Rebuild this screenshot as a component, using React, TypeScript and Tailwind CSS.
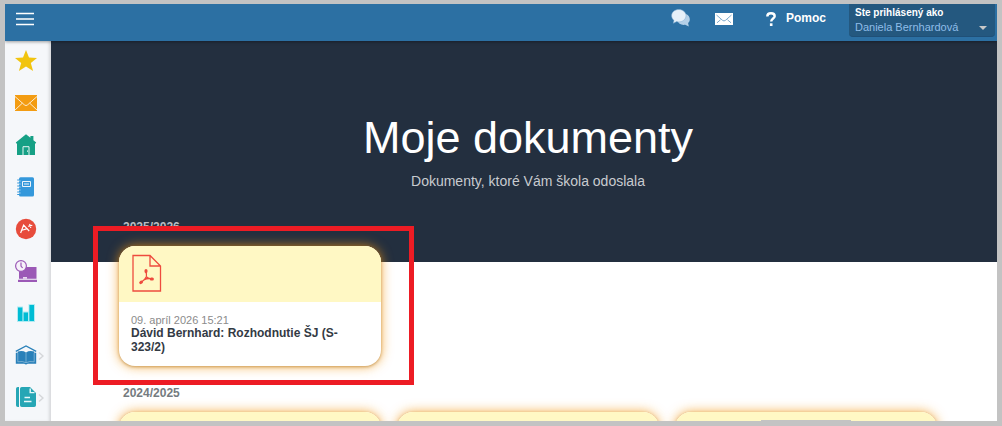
import React from 'react';

interface NavItem {
  label: string;
  icon: React.ReactNode;
  hasSubmenu?: boolean;
}

interface DocumentItem {
  id: number;
  date?: string;
  title?: string;
  highlighted?: boolean;
  preview?: boolean;
}

interface YearGroup {
  year: string;
  documents: DocumentItem[];
}

const navItems: NavItem[] = [
  {
    label: 'Obľúbené',
    icon: <path fill="#f1c40f" d="M11 0l3 7.6 8 .4-6.2 5 2.3 8L11 16.600 3.900 21l2.300-8L0 8l8-.400z" />,
  },
  {
    label: 'Správy',
    icon: (
      <>
        <path fill="#f39c12" d="M0 3h22v16H0z" />
        <path fill="none" stroke="#fdebd0" d="M0 4.500l9.300 8.300q1.700 1.600 3.400 0L22 4.500M0 18l7.300-6.800M22 18l-7.300-6.800" />
      </>
    ),
  },
  {
    label: 'Domov',
    icon: (
      <>
        <path fill="#16a085" d="M11 .2L.8 8.600l.8 1.200.4-.2V21h18V9.600l.4.2.8-1.200-2.800-2.300V2h-3v1.700z" />
        <path fill="none" stroke="#e8f6f3" d="M8 21v-8.300h6V21" />
        <path fill="#e8f6f3" d="M12 16.500h1v1.200h-1z" />
      </>
    ),
  },
  {
    label: 'Triedna kniha',
    icon: (
      <>
        <rect x="4" y="1.3" width="15" height="19.2" rx="1.5" fill="#3498db" />
        <path stroke="#3498db" strokeWidth="1" d="M2.200 4h3M2.200 7h3M2.200 10h3M2.200 13h3M2.200 16h3M2.200 18.500h3" />
        <path stroke="#d6eaf8" strokeWidth=".7" d="M4 5h1.600M4 8h1.600M4 11h1.600M4 14h1.600M4 17h1.600" />
        <path fill="#3498db" stroke="#eaf4fb" strokeWidth="1" d="M7.500 5.500h8v5h-8z" />
        <path stroke="#eaf4fb" d="M9 8h5" />
      </>
    ),
  },
  {
    label: 'Známky',
    icon: (
      <>
        <circle cx="11" cy="11" r="10.200" fill="#e74c3c" />
        <path fill="none" stroke="#fff" strokeWidth="1.200" d="M5.600 15L8.600 7l5.600 6M6 12.500l6.400-1.800M13.300 8.400l4-1.200M14.600 5.800l1.200 4" />
      </>
    ),
  },
  {
    label: 'Rozvrh',
    icon: (
      <>
        <path fill="#9b59b6" d="M4 7h17.500v11.800H4zM3 19.800h19V22H3z" />
        <path fill="#e8daef" d="M8 17h4v1.800H8z" />
        <circle cx="6" cy="6" r="5.400" fill="#f7f2fa" stroke="#9b59b6" strokeWidth="1.200" />
        <path fill="none" stroke="#9b59b6" strokeWidth="1.200" d="M6 2.600V6l1.600 2" />
      </>
    ),
  },
  {
    label: 'Dochádzka',
    icon: (
      <>
        <path fill="#b2ebf2" d="M2 4.500h6v5h5.500V2H20v18H2z" />
        <path fill="#00bcd4" d="M3 5.500h4.400V19H3zM8.600 10.500H13V19H8.600zM14.400 3H19v16h-4.600z" />
      </>
    ),
  },
  {
    label: 'Vyučovanie',
    hasSubmenu: true,
    icon: (
      <>
        <path fill="none" stroke="#2980b9" strokeWidth="1.200" d="M.8 7.400L11 2l10.200 5.400" />
        <path fill="#2980b9" d="M2.800 7.500Q7.500 6.200 11 8.400q3.500-2.200 8.200-.9v1.300h2v11h-8.500q-1.700 1.400-3.400 0H.8v-11h2z" />
        <path fill="none" stroke="#a9cce3" strokeWidth=".6" d="M2.800 8.800v9Q7.500 16.800 11 18.700q3.500-1.900 8.200-.9v-9M11 8.400v10" />
      </>
    ),
  },
  {
    label: 'Dokumenty',
    hasSubmenu: true,
    icon: (
      <>
        <path fill="#26a6b5" d="M2.800 1H4v20H2.800Q1 21 1 19.200V2.800Q1 1 2.800 1zM6.800 1H15l6 6v12.200q0 1.800-1.800 1.800H6.800Q5 21 5 19.200V2.800Q5 1 6.800 1z" />
        <path fill="none" stroke="#e8f8f9" strokeWidth="1.400" d="M15.200 2.400v4.200h4.300M9.500 11.500h5.500M9 15.500h7.500" />
      </>
    ),
  },
];

const groups: YearGroup[] = [
  {
    year: '2025/2026',
    documents: [
      { id: 1, date: '09. apríl 2026 15:21', title: 'Dávid Bernhard: Rozhodnutie ŠJ (S-323/2)', highlighted: true },
    ],
  },
  {
    year: '2024/2025',
    documents: [{ id: 2 }, { id: 3 }, { id: 4, preview: true }],
  },
];

const PdfIcon: React.FC = () => (
  <svg viewBox="0 0 30 38" className="h-[38px] w-[30px]" fill="none" stroke="#ee4b3e" strokeWidth="1.300" aria-hidden="true">
    <path d="M1 1.500h17l10.500 10.500v25H1zM18 1.500V12h10.500" />
    <path strokeLinejoin="round" d="M14 17.500q.8 3.500.3 5.200-1.500 3.300-4.500 5M14.300 22.700q1.700 1.800 4.700 2.100M11.800 25.800q3.500-1.700 7.200-1.200" />
    <g strokeWidth="3" strokeLinecap="round">
      <path d="M14 16.500v1M8.700 28.600l.8-.6M19.200 25h1.200" />
    </g>
  </svg>
);

const Header: React.FC = () => (
  <header className="relative z-20 flex h-[37px] shrink-0 justify-between bg-[#2c70a3] shadow-[0_1px_3px_rgba(0,0,0,0.35)]">
    <button type="button" aria-label="Menu" className="flex items-center pb-2 pl-[11px]">
      <svg viewBox="0 0 18 14" className="h-[14px] w-[18px]" stroke="#fff" strokeWidth="1.600" aria-hidden="true">
        <path d="M0 1.500h18M0 7h18M0 12.500h18" />
      </svg>
    </button>

    <div className="flex pr-0.5">
      <div className="flex h-7 items-center">
        <a href="#chat" aria-label="Chat" className="mr-6">
          <svg viewBox="0 0 20 18" className="h-[18px] w-5" aria-hidden="true">
            <path fill="#b4d0e8" d="M13 4.500c3.500.6 5.800 2.800 5.800 5.700 0 1.700-.6 2.900-1.700 3.900l.7 3.400-3.600-1.700c-4 .6-7-1.200-7.500-3.800z" />
            <path fill="#e6f0f9" stroke="#7fabd0" strokeWidth=".5" d="M7.800.5c4 0 7.200 2.700 7.200 6.200s-3.200 6.200-7.200 6.200q-1.200 0-2.200-.300L2.300 14.300l.7-3C1.500 10.200.6 8.500.6 6.700.6 3.200 3.800.5 7.800.5z" />
          </svg>
        </a>
        <a href="#spravy" aria-label="Správy" className="mr-[33px]">
          <svg viewBox="0 0 18 12" className="mt-0.5 h-3 w-[18px]" aria-hidden="true">
            <path fill="#fff" d="M0 0h18v12H0z" />
            <path fill="none" stroke="#6fa0c6" strokeWidth=".9" d="M1.500 2l6 5.300q1.500 1.300 3 0l6-5.300M2 9.800l3.500-3M16 9.800l-3.500-3" />
          </svg>
        </a>
        <a href="#pomoc" className="mr-[23px] flex items-center text-[12px] font-bold text-white">
          <svg viewBox="0 0 10 14" className="mr-2.5 mt-0.5 h-[14px] w-[10px]" aria-hidden="true">
            <path fill="none" stroke="#fff" strokeWidth="2.400" d="M1.300 4.500C1.300 2.500 2.800 1.300 5 1.300s3.700 1.100 3.700 3c0 2.200-3.500 2.400-3.500 5.200" />
            <path fill="#fff" d="M3.900 11.300h2.600V14H3.900z" />
          </svg>
          Pomoc
        </a>
      </div>
      <button
        type="button"
        className="flex h-[33px] w-[146px] flex-col rounded-b-sm border-b border-[#1f5078] bg-[#24587f] pl-1.5 pr-2 pt-0.5 text-left"
      >
        <span className="text-[10px] font-bold leading-[14px] text-white">Ste prihlásený ako</span>
        <span className="flex w-full items-center justify-between text-[11px] leading-[14px] text-[#8fbde8]">
          Daniela Bernhardová
          <svg viewBox="0 0 8 4" className="mt-0.5 h-1 w-2" aria-hidden="true">
            <path fill="#c8c8c8" d="M0 0h8L4 4z" />
          </svg>
        </span>
      </button>
    </div>
  </header>
);

const Sidebar: React.FC = () => (
  <nav className="relative z-10 flex w-[46px] shrink-0 flex-col gap-5 overflow-hidden bg-[#f5f7fa] pl-2.5 pt-[9px] shadow-[inset_-3px_0_3px_-1px_rgba(0,0,0,0.12)]">
    {navItems.map((item) => (
      <a key={item.label} href="#menu" aria-label={item.label} className="flex shrink-0 items-center">
        <svg viewBox="0 0 22 22" className="h-[22px] w-[22px]" aria-hidden="true">
          {item.icon}
        </svg>
        {item.hasSubmenu && (
          <svg viewBox="0 0 6 8" className="ml-px mt-0.5 h-2 w-1.5" fill="none" stroke="#d5d7da" strokeWidth="1.500" aria-hidden="true">
            <path d="M1 .5L5 4 1 7.500" />
          </svg>
        )}
      </a>
    ))}
  </nav>
);

const DocumentCard: React.FC<{ item: DocumentItem }> = ({ item }) => (
  <div className="relative w-[262px] shrink-0">
    <a
      href="#dokument"
      className="block h-[120px] overflow-hidden rounded-2xl bg-white shadow-[0_0_12px_rgba(243,150,18,0.8),0_1px_3px_rgba(120,80,20,0.5)]"
    >
      <div className="h-14 bg-[#fff8c4] px-[13px] pt-2">
        {item.title && <PdfIcon />}
        {item.preview && <div className="mx-auto h-12 w-[90px] border border-[#c3c3c3] bg-white" />}
      </div>
      {item.title && (
        <div className="px-3 pt-3">
          <div className="text-[11px] leading-[12px] text-[#8b8b8b]">{item.date}</div>
          <div className="text-[12px] font-bold leading-[14px] text-[#333a44]">{item.title}</div>
        </div>
      )}
    </a>

    {/* Red marker around the new document */}
    {item.highlighted && (
      <div className="pointer-events-none absolute -bottom-[19px] -left-[26px] -right-[33px] -top-5 border-[5px] border-[#ed1c24]" />
    )}
  </div>
);

const App: React.FC = () => {
  return (
    <div className="h-screen bg-[#c3c3c3] px-[5px] pb-[5px] pt-1 font-['Liberation_Sans',Arial,sans-serif]">
      <div className="flex h-full flex-col overflow-hidden bg-white">
        <Header />
        <div className="flex min-h-0 flex-1">
          <Sidebar />
          <main className="min-w-0 flex-1 overflow-hidden">
            {/* Hero */}
            <div className="h-[221px] bg-[#232f3f] pl-2 pt-[70px] text-center">
              <h1 className="text-[45px] leading-[54px] text-white">Moje dokumenty</h1>
              <p className="mt-1.5 text-[14px] leading-5 text-[#c8cbcf]">Dokumenty, ktoré Vám škola odoslala</p>
            </div>

            {/* Documents by school year */}
            <div className="relative -mt-[43px] pl-2">
              <div className="mx-auto flex max-w-[818px] flex-col gap-[19px]">
                {groups.map((group, index) => (
                  <section key={group.year}>
                    <h2 className={`mb-[11px] pl-1 text-[12px] font-bold leading-4 ${index === 0 ? 'text-[#b9bdc2]' : 'text-[#757b80]'}`}>
                      {group.year}
                    </h2>
                    <div className="flex gap-4">
                      {group.documents.map((item) => (
                        <DocumentCard key={item.id} item={item} />
                      ))}
                    </div>
                  </section>
                ))}
              </div>
            </div>
          </main>
        </div>
      </div>
    </div>
  );
};

export default App;
